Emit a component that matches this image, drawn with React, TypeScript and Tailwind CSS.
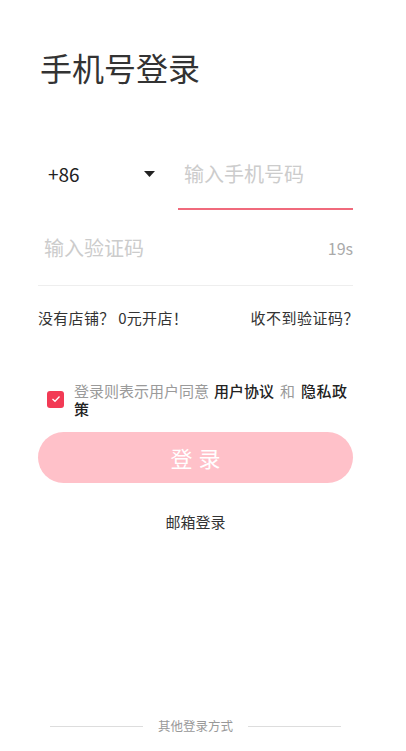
import React from "react";

export default function App() {
  const font = { fontFamily: '"Noto Sans CJK SC", "Noto Sans", sans-serif' };
  return (
    <div className="h-screen w-full bg-white flex flex-col pl-[38px] pr-[53px]" style={font}>
      <h1 className="pt-[48px] pl-[2px] text-[32px] leading-[38px] text-[#333333] font-normal">手机号登录</h1>

      <div className="mt-[64px] flex">
        <div className="w-[140px] h-[48px] flex items-center justify-between pl-[10px] pr-[23px]">
          <span className="text-[19px] text-[#222222]">+86</span>
          <svg width="11" height="6" viewBox="0 0 11 6">
            <path d="M0 0 L11 0 L5.5 6 Z" fill="#222222" />
          </svg>
        </div>
        <div className="flex-1 h-[60px] border-b-2 border-[#f06a7c]">
          <div className="h-[48px] flex items-center pl-[6px] text-[20px] text-[#cccccc]">输入手机号码</div>
        </div>
      </div>

      <div className="h-[76px] flex items-center justify-between border-b border-[#eeeeee] pl-[6px]">
        <span className="text-[20px] text-[#cccccc]">输入验证码</span>
        <span className="text-[16px] text-[#aaaaaa]">19s</span>
      </div>

      <div className="mt-[22px] h-[20px] flex items-center justify-between text-[15px] text-[#333333]">
        <span className="tracking-[0.3px]">没有店铺？ 0元开店！</span>
        <span className="tracking-[0.5px] -mr-[6px]">收不到验证码？</span>
      </div>

      <div className="mt-[53px] flex items-center pl-[9px]">
        <div className="w-[17px] h-[17px] rounded-[3px] bg-[#f23a55] flex items-center justify-center shrink-0">
          <svg width="10" height="8" viewBox="0 0 10 8">
            <path d="M1.5 4 L4 6.3 L8.5 1.5" stroke="white" strokeWidth="1.3" fill="none" />
          </svg>
        </div>
        <div className="ml-[10px] flex flex-col text-[15px] leading-[17px] text-[#9a9a9a]">
          <div className="h-[18px] flex items-center whitespace-nowrap">
            <span>登录则表示用户同意</span>
            <span className="ml-[5px] text-[#222222] font-medium">用户协议</span>
            <span className="ml-[6px]">和</span>
            <span className="ml-[6px] text-[#222222] font-medium tracking-[0.5px]">隐私政</span>
          </div>
          <div className="h-[18px] flex items-center">
            <span className="text-[#222222] font-medium">策</span>
          </div>
        </div>
      </div>

      <button className="mt-[15px] h-[51px] w-full rounded-full bg-[#ffc1c9] text-white text-[22px] tracking-[6px] pl-[6px]">
        登录
      </button>

      <div className="mt-[29px] text-center text-[15px] leading-[20px] text-[#333333]">邮箱登录</div>

      <div className="mt-auto pb-[17px] flex items-center justify-center">
        <div className="w-[93px] h-px bg-[#dddddd]" />
        <span className="mx-[15px] text-[12.5px] leading-[16px] text-[#999999]">其他登录方式</span>
        <div className="w-[93px] h-px bg-[#dddddd]" />
      </div>
    </div>
  );
}
